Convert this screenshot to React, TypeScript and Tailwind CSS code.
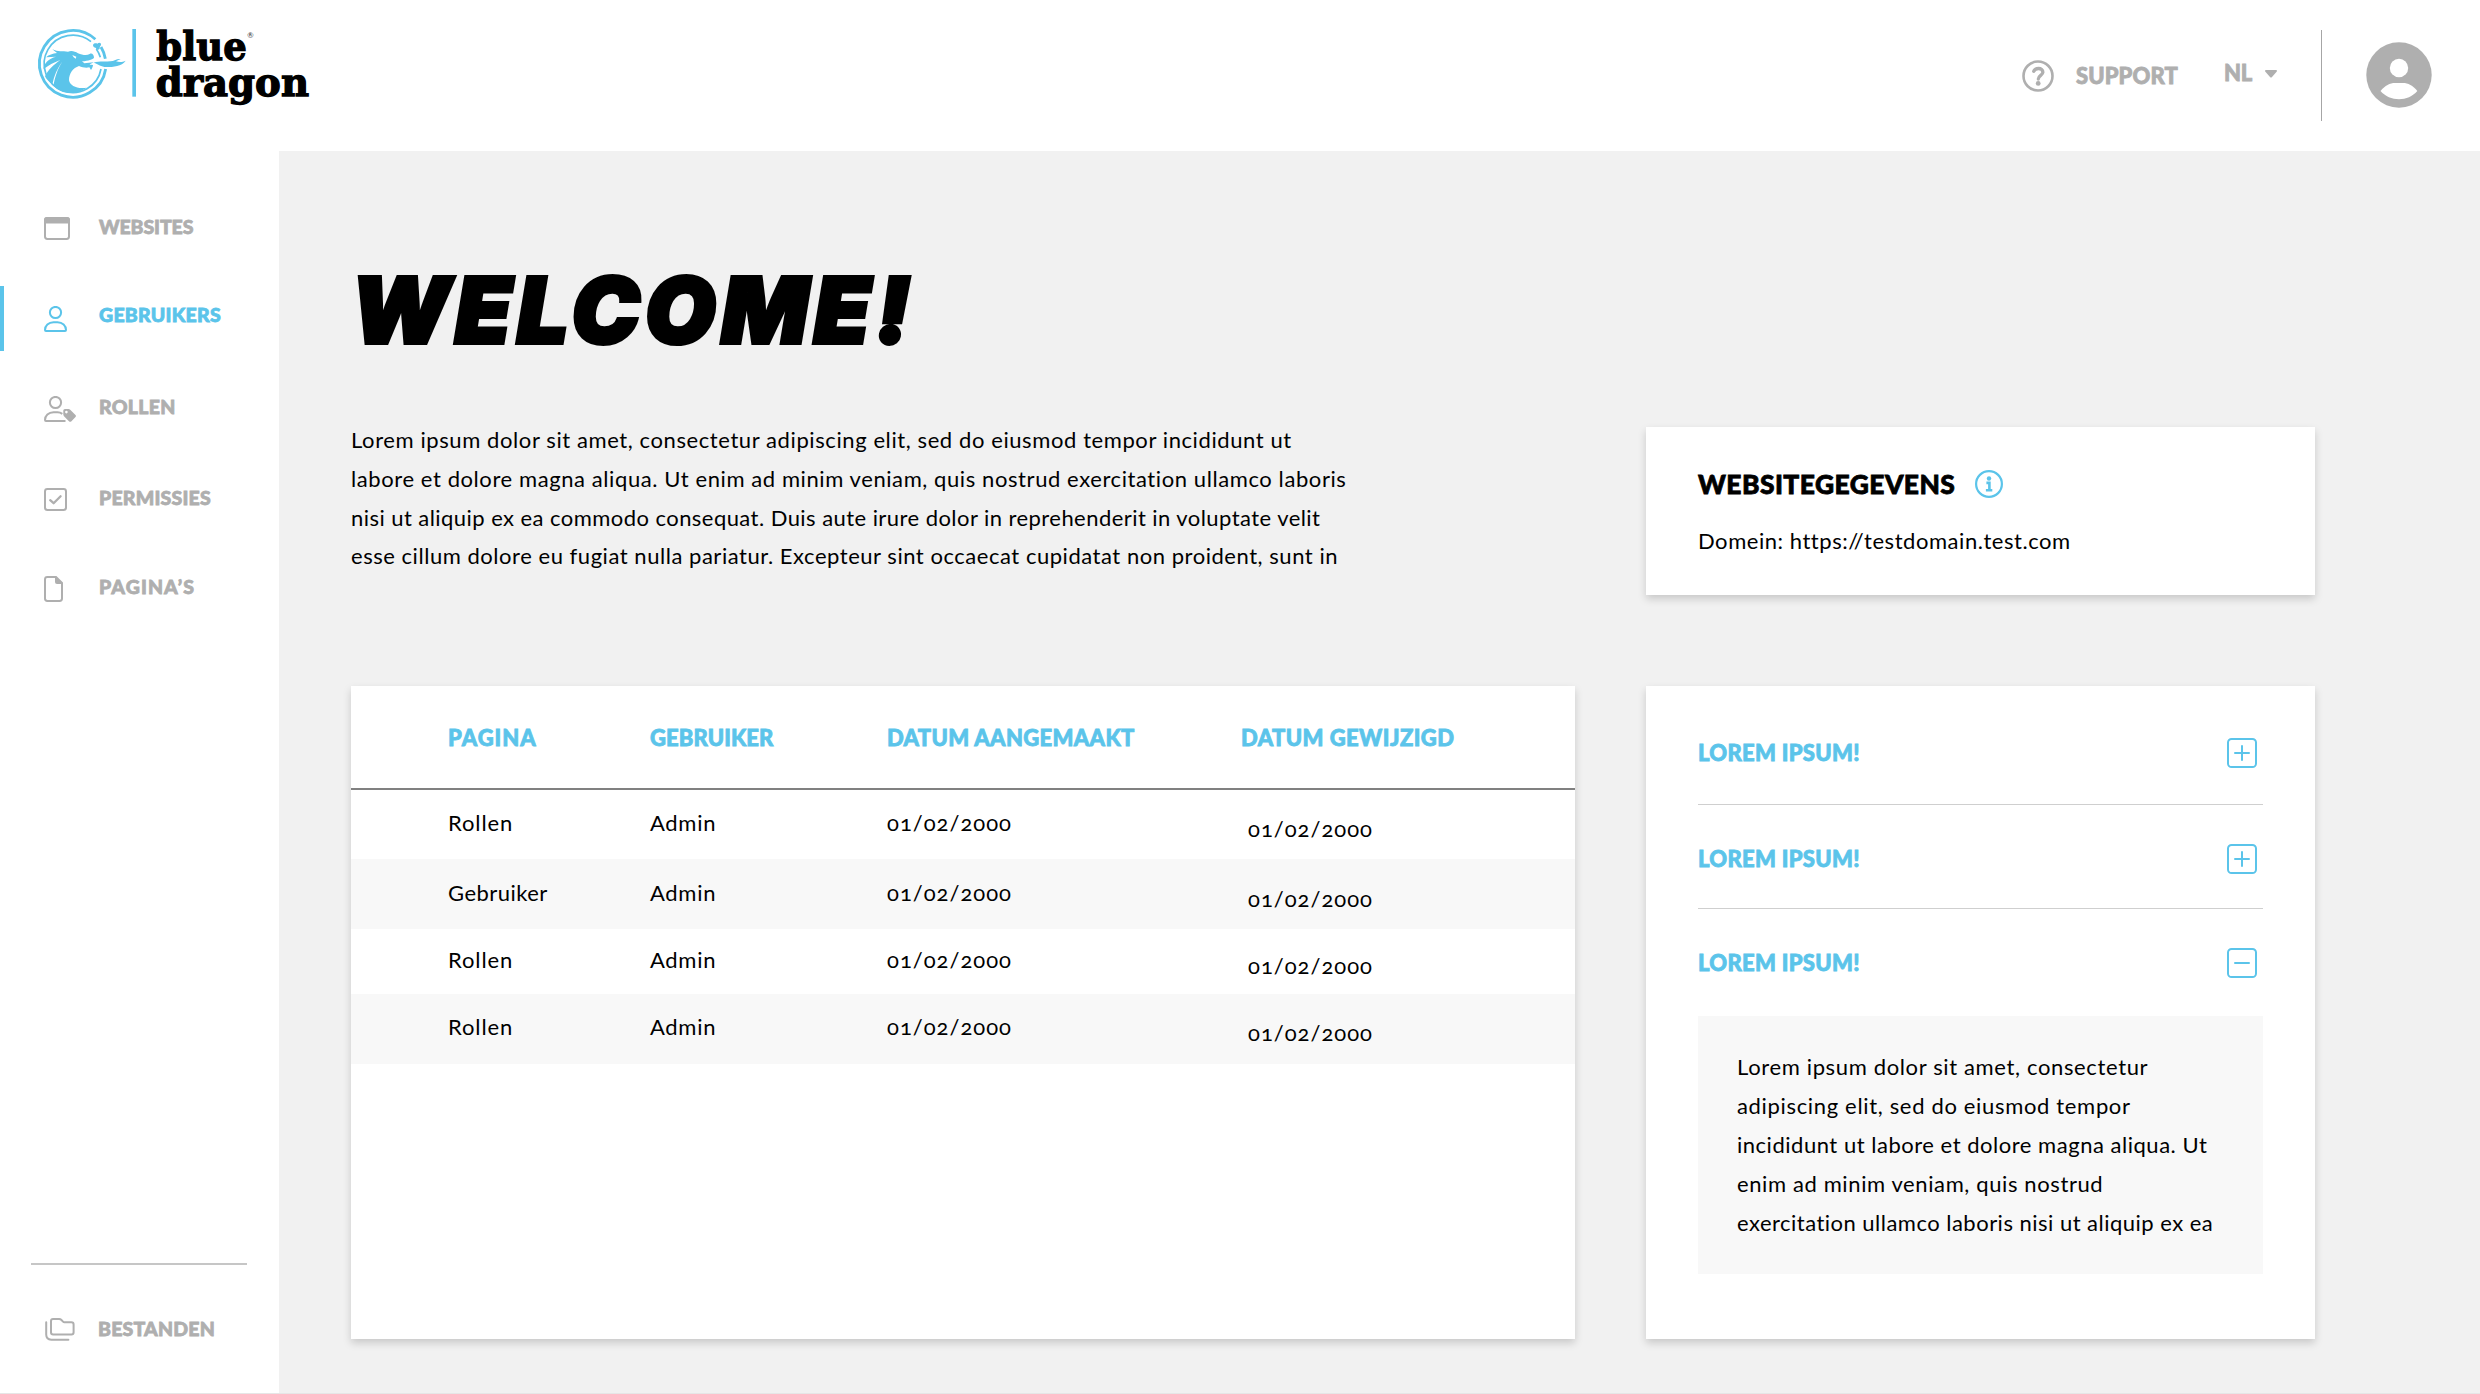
import React from "react";

const BLUE = "#5bc4ea";
const GRAY = "#afafaf";

function Logo() {
  return (
    <svg className="ml-5 h-[120px] w-[310px] shrink-0" viewBox="0 0 930 360" role="img" aria-label="blue dragon">
      <g fill="none" stroke={BLUE}>
        <path strokeWidth="8.5" d="M226 88 A100 100 0 1 0 257 177" />
        <path strokeWidth="5" d="M213 95 A86 86 0 1 0 243 177" />
        <path strokeWidth="8.5" d="M243 111 A100 100 0 0 1 256 146" />
        <path strokeWidth="5" d="M229 117 A86 86 0 0 1 241 142" />
      </g>
      <g fill={BLUE}>
        <path d="M97 118 C114 126 128 123 144 125 C156 121 165 125 174 130 C187 135 200 138 209 132 C216 128 222 135 222 143 C218 149 206 152 186 154 L193 160 L221 157 C210 163 202 164 219 165 C218 171 217 175 213 180 L208 172 C198 175 187 172 177 168 C159 174 147 190 147 211 C150 229 174 238 200 233 C183 245 166 249 153 249 C129 249 113 240 100 227 C105 202 112 177 127 155 C111 176 103 196 97 223 C88 216 79 208 75 199 C84 180 101 164 121 150 C101 158 85 166 71 177 C71 160 86 146 108 140 L78 142 C87 134 98 131 111 129 Z" />
        <path d="M221 158 C240 151 267 159 286 150 C291 147 297 146 302 147 L288 154 C297 157 308 157 317 152 C305 169 280 171 259 171 C243 171 235 162 221 158 Z" />
        <path d="M219 105 C222 98 230 100 232 101 C237 96 244 98 243 105 C240 109 239 111 239 116 C235 122 228 119 228 114 C222 113 219 110 219 105 Z" />
        <rect x="337" y="57" width="11" height="203" />
      </g>
      <path fill="#fff" d="M157 135 L169 140 L167 146 Q160 144 157 135 Z" />
      <g className="font-['DejaVu_Serif',serif] font-bold" fill="#000" stroke="#000" strokeWidth="4">
        <text x="409" y="150" fontSize="119" textLength="271" lengthAdjust="spacingAndGlyphs">blue</text>
        <text x="407" y="258" fontSize="119" textLength="460" lengthAdjust="spacingAndGlyphs">dragon</text>
      </g>
      <text x="682" y="83" fontSize="23" fill="#333" className="font-['Lato',sans-serif]">®</text>
    </svg>
  );
}

function HelpIcon() {
  return (
    <svg className="size-8 shrink-0" viewBox="0 0 32 32" fill="none" stroke={GRAY}>
      <circle cx="16" cy="16" r="14.5" strokeWidth="2.6" />
      <path d="M11.7 11.3 C12.5 9.4 14.3 8.5 16.6 8.5 C19 8.5 20.9 10 20.9 12.2 C20.9 15.2 16.3 15.6 16.3 19" strokeWidth="3.3" strokeLinecap="round" strokeLinejoin="round" />
      <circle cx="16.2" cy="23.4" r="2.4" fill={GRAY} stroke="none" />
    </svg>
  );
}

function AvatarIcon() {
  return (
    <svg className="size-[66px] shrink-0" viewBox="0 0 66 66">
      <circle cx="33" cy="33" r="32.7" fill={GRAY} />
      <circle cx="33" cy="26" r="9.2" fill="#fff" />
      <path fill="#fff" d="M14.5 49 C19 43.5 24 41 29 41 H37 C42 41 47 43.5 51.3 49 C46.5 54.5 40 57.2 33 57.2 C26 57.2 19.3 54.5 14.5 49 Z" />
    </svg>
  );
}

function WindowIcon() {
  return (
    <svg className="h-[23px] w-[26px]" viewBox="0 0 26 23">
      <rect x="1" y="1" width="24" height="21" rx="2.4" fill="none" stroke={GRAY} strokeWidth="2" />
      <path d="M0 6.5 V3 A3 3 0 0 1 3 0 H23 A3 3 0 0 1 26 3 V6.5 Z" fill={GRAY} />
    </svg>
  );
}

function UserIcon() {
  return (
    <svg className="h-[26px] w-[23px]" viewBox="0 0 23 26" fill="none" stroke={BLUE} strokeWidth="2">
      <circle cx="11.5" cy="6.5" r="5.6" />
      <path d="M9.5 16.3 H13.5 C18.5 16.3 22 19.8 22 24 Q22 25 21 25 H2 Q1 25 1 24 C1 19.8 4.5 16.3 9.5 16.3 Z" />
    </svg>
  );
}

function UserTagIcon() {
  return (
    <svg className="h-[26px] w-8" viewBox="0 0 32 26" fill="none" stroke={GRAY} strokeWidth="2">
      <circle cx="11.5" cy="6.5" r="5.6" />
      <path d="M18.3 17.9 C17 16.9 15.4 16.3 13.5 16.3 H9.5 C4.5 16.3 1 19.8 1 24 Q1 25 2 25 H21.5" />
      <path fill={GRAY} stroke="none" fillRule="evenodd" d="M19.3 14.6 Q19.3 13 20.9 13 H24.6 Q25.5 13 26.2 13.7 L31.5 19 Q32.4 20 31.5 21 L27.2 25.4 Q26.2 26.3 25.2 25.4 L20 20.2 Q19.3 19.5 19.3 18.6 Z M22.4 14.8 A1.3 1.3 0 1 0 22.4 17.4 A1.3 1.3 0 1 0 22.4 14.8 Z" />
    </svg>
  );
}

function CheckSquareIcon() {
  return (
    <svg className="size-[23px]" viewBox="0 0 23 23" fill="none" stroke={GRAY}>
      <rect x="1" y="1" width="21" height="21" rx="2.4" strokeWidth="2" />
      <path d="M6.2 12.2 L9.6 15.2 L16.6 8.2" strokeWidth="2.3" strokeLinecap="round" strokeLinejoin="round" />
    </svg>
  );
}

function PageIcon() {
  return (
    <svg className="h-[26px] w-[19px]" viewBox="0 0 19 26" fill="none" stroke={GRAY} strokeWidth="2">
      <path d="M12 1 H3.4 Q1 1 1 3.4 V22.6 Q1 25 3.4 25 H15.6 Q18 25 18 22.6 V7 Z" />
      <path d="M11 1 V6 Q11 8 13 8 H18 V7 L12 1 Z" fill={GRAY} stroke="none" />
    </svg>
  );
}

function FoldersIcon() {
  return (
    <svg className="h-[23px] w-[30px]" viewBox="0 0 30 23" fill="none" stroke={GRAY} strokeWidth="2" strokeLinecap="round" strokeLinejoin="round">
      <path d="M6 3 Q6 1 8 1 H14.2 Q15.4 1 16.2 1.8 L18 3.6 Q18.6 4.2 19.4 4.2 H26.4 Q28.6 4.2 28.6 6.4 V14.3 Q28.6 16.6 26.4 16.6 H8.2 Q6 16.6 6 14.3 Z" />
      <path d="M1.2 4.2 V16.6 Q1.2 21.7 6.3 21.7 H23.4" />
    </svg>
  );
}

function InfoIcon() {
  return (
    <svg className="size-[28px] shrink-0" viewBox="0 0 28 28">
      <circle cx="14" cy="14" r="12.9" fill="none" stroke={BLUE} strokeWidth="2.2" />
      <circle cx="14" cy="8.5" r="2.2" fill={BLUE} />
      <path d="M11.4 12.9 H14.4 V20 M10.9 20.3 H17.3" fill="none" stroke={BLUE} strokeWidth="2.6" />
    </svg>
  );
}

function ToggleIcon({ open }: { open: boolean }) {
  return (
    <svg className="size-[30px] shrink-0" viewBox="0 0 30 30" fill="none" stroke={BLUE} strokeLinecap="round">
      <rect x="1" y="1" width="28" height="28" rx="3.6" strokeWidth="2" />
      <path d={open ? "M8 15 H22" : "M8 15 H22 M15 8 V22"} strokeWidth="2" />
    </svg>
  );
}

const navItems = [
  { label: "WEBSITES", icon: <WindowIcon />, row: "", text: "mb-1 tracking-[-0.1px]" },
  { label: "GEBRUIKERS", icon: <UserIcon />, row: "mt-[25px] bg-linear-to-r from-[#5bc4ea] from-[4px] to-white to-[4px] text-[#5bc4ea]", text: "mb-2 tracking-[0.25px]" },
  { label: "ROLLEN", icon: <UserTagIcon />, row: "mt-[25px]", text: "mb-1 tracking-[0.3px]" },
  { label: "PERMISSIES", icon: <CheckSquareIcon />, row: "mt-[26px]", text: "mb-1 tracking-[0.2px]" },
  { label: "PAGINA’S", icon: <PageIcon />, row: "mt-[24px]", text: "mb-1 tracking-[1.1px]" },
];

const introLines = [
  { text: "Lorem ipsum dolor sit amet, consectetur adipiscing elit, sed do eiusmod tempor incididunt ut", track: "tracking-[0.591px]" },
  { text: "labore et dolore magna aliqua. Ut enim ad minim veniam, quis nostrud exercitation ullamco laboris", track: "tracking-[0.585px]" },
  { text: "nisi ut aliquip ex ea commodo consequat. Duis aute irure dolor in reprehenderit in voluptate velit", track: "tracking-[0.445px]" },
  { text: "esse cillum dolore eu fugiat nulla pariatur. Excepteur sint occaecat cupidatat non proident, sunt in", track: "tracking-[0.534px]" },
];

const panelLines = [
  { text: "Lorem ipsum dolor sit amet, consectetur", track: "tracking-[0.64px]" },
  { text: "adipiscing elit, sed do eiusmod tempor", track: "tracking-[0.663px]" },
  { text: "incididunt ut labore et dolore magna aliqua. Ut", track: "tracking-[0.52px]" },
  { text: "enim ad minim veniam, quis nostrud", track: "tracking-[0.61px]" },
  { text: "exercitation ullamco laboris nisi ut aliquip ex ea", track: "tracking-[0.48px]" },
];

const rows = [
  { page: "Rollen", track: "tracking-[0.9px]", row: "h-[69px] pt-[17px]" },
  { page: "Gebruiker", track: "tracking-[0.45px]", row: "h-[70px] bg-[#f8f8f8] pt-[18px]" },
  { page: "Rollen", track: "tracking-[0.9px]", row: "h-[65px] pt-[15px]" },
  { page: "Rollen", track: "tracking-[0.9px]", row: "h-[70px] bg-[#f8f8f8] pt-[17px]" },
];

const columns = "grid grid-cols-[202px_237px_354px_1fr] pl-[97px]";
const strong = "font-black [-webkit-text-stroke:0.8px_currentColor]";
const card = "bg-white shadow-[0_4px_8px_rgba(0,0,0,0.17)]";

export default function App() {
  return (
    <div className="flex h-[1394px] w-[2480px] flex-col overflow-hidden border-b border-[#e6e6e6] bg-white font-['Lato',sans-serif] text-[22px] leading-8 text-black">
      <header className="flex h-[151px] shrink-0 items-center pr-12">
        <div className="h-full pt-[10px]">
          <Logo />
        </div>
        <div className="ml-auto flex items-center text-[#afafaf]">
          <HelpIcon />
          <span className={`ml-[22px] w-[148px] tracking-[0.1px] ${strong}`}>SUPPORT</span>
          <span className={`mb-[5px] w-[41px] tracking-[-0.3px] ${strong}`}>NL</span>
          <svg className="mb-1 h-2 w-3" viewBox="0 0 12 8" fill={GRAY}>
            <path d="M1 0 H11 Q12.6 0.4 11.6 1.7 L7 7 Q6 8 5 7 L0.4 1.7 Q-0.6 0.4 1 0 Z" />
          </svg>
          <div className="ml-[44px] h-[91px] w-px bg-[#a6a6a6]" />
          <div className="mb-0.5 ml-11">
            <AvatarIcon />
          </div>
        </div>
      </header>

      <div className="flex flex-1">
        <aside className="flex w-[279px] shrink-0 flex-col pt-[45px] text-[19.5px] leading-7 text-[#afafaf]">
          <nav>
            {navItems.map((item) => (
              <a key={item.label} className={`flex h-[65px] items-center pl-11 ${item.row}`}>
                <span className="w-[55px]">{item.icon}</span>
                <span className={`${strong} ${item.text}`}>{item.label}</span>
              </a>
            ))}
          </nav>
          <div className="mt-auto ml-[31px] h-0.5 w-[216px] bg-[#c6c6c6]" />
          <a className="mt-[50px] mb-[50px] flex items-center pl-[45px]">
            <span className="w-[53px]">
              <FoldersIcon />
            </span>
            <span className={`tracking-[0.2px] ${strong}`}>BESTANDEN</span>
          </a>
        </aside>

        <main className="flex-1 bg-[#f1f1f1] pt-[111px] pl-[72px]">
          <h1 className="mb-[62px] font-['Inter',sans-serif] text-[91px] leading-[96px] font-black tracking-[5.5px] italic [-webkit-text-stroke:4px_#000]">
            WELCOME!
          </h1>

          <div className="grid grid-cols-[1224px_669px] grid-rows-[266px_653px] gap-x-[71px]">
            <p className="pt-px leading-[38.8px] whitespace-nowrap">
              {introLines.map((line) => (
                <span key={line.text} className={`block ${line.track}`}>{line.text}</span>
              ))}
            </p>

            <section className={`mt-[7px] h-[168px] pt-[39px] pl-[52px] ${card}`}>
              <div className="flex items-center">
                <h2 className={`w-[277px] text-[26.4px] leading-9 tracking-[0.45px] ${strong}`}>WEBSITEGEGEVENS</h2>
                <InfoIcon />
              </div>
              <p className="mt-[23px] tracking-[0.54px]">Domein: https://testdomain.test.com</p>
            </section>

            <section className={card}>
              <div className={`h-[104px] items-center border-b-2 border-[#808080] pt-px text-[#5bc4ea] ${columns} ${strong}`}>
                <span className="tracking-[1px]">PAGINA</span>
                <span className="tracking-[0.1px]">GEBRUIKER</span>
                <span className="tracking-[0.35px]">DATUM AANGEMAAKT</span>
                <span className="tracking-[0.45px]">DATUM GEWIJZIGD</span>
              </div>
              {rows.map((r, i) => (
                <div key={i} className={`${columns} ${r.row}`}>
                  <span className={r.track}>{r.page}</span>
                  <span className="tracking-[0.7px]">Admin</span>
                  <span className="tracking-[1px] oldstyle-nums">01/02/2000</span>
                  <span className="pt-1.5 pl-[7px] tracking-[1px] oldstyle-nums">01/02/2000</span>
                </div>
              ))}
            </section>

            <section className={`px-[52px] ${card}`}>
              <div className="flex h-[119px] items-center justify-between border-b border-[#cfcfcf] pt-[15px] pr-1.5 text-[#5bc4ea]">
                <span className={`pt-px tracking-[0.3px] ${strong}`}>LOREM IPSUM!</span>
                <ToggleIcon open={false} />
              </div>
              <div className="flex h-[104px] items-center justify-between border-b border-[#cfcfcf] pt-1 pr-1.5 text-[#5bc4ea]">
                <span className={`tracking-[0.3px] ${strong}`}>LOREM IPSUM!</span>
                <ToggleIcon open={false} />
              </div>
              <div className="flex h-[107px] items-center justify-between pr-1.5 text-[#5bc4ea]">
                <span className={`tracking-[0.3px] ${strong}`}>LOREM IPSUM!</span>
                <ToggleIcon open />
              </div>
              <p className="h-[258px] bg-[#f8f8f8] pt-8 pl-[39px] leading-[38.9px] whitespace-nowrap">
                {panelLines.map((line) => (
                  <span key={line.text} className={`block ${line.track}`}>{line.text}</span>
                ))}
              </p>
            </section>
          </div>
        </main>
      </div>
    </div>
  );
}
